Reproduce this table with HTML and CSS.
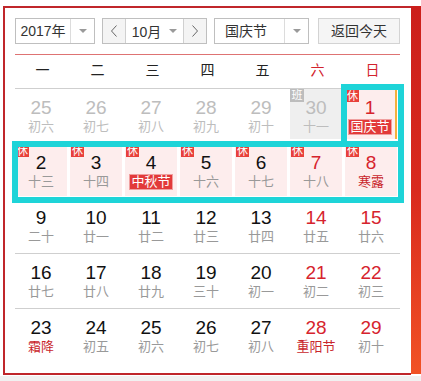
FILE: index.html
```html
<!DOCTYPE html>
<html lang="zh-CN">
<head>
<meta charset="utf-8">
<title>万年历</title>
<link rel="stylesheet" href="styles.css">
</head>
<body>
<div class="page">
  <div class="frame">
    <div class="controls">
      <div class="select year">
        <span class="sel-text">2017年</span>
        <span class="sel-arrow"><i class="tri"></i></span>
      </div>
      <div class="month-group">
        <span class="nav-btn"><svg width="8" height="12" viewBox="0 0 8 12"><polyline points="6.5,0.5 1.5,6 6.5,11.5" fill="none" stroke="#666" stroke-width="1"/></svg></span>
        <span class="month-mid">10月<i class="tri"></i></span>
        <span class="nav-btn"><svg width="8" height="12" viewBox="0 0 8 12"><polyline points="1.5,0.5 6.5,6 1.5,11.5" fill="none" stroke="#666" stroke-width="1"/></svg></span>
      </div>
      <div class="select holiday">
        <span class="sel-text">国庆节</span>
        <span class="sel-arrow"><i class="tri"></i></span>
      </div>
      <div class="today-btn">返回今天</div>
    </div>
    <div class="redline"></div>
    <div class="weekhead">
      <span>一</span><span>二</span><span>三</span><span>四</span><span>五</span><span class="we">六</span><span class="we">日</span>
    </div>
    <div class="week">
      <div class="day prev"><span class="num">25</span><span class="lunar">初六</span></div>
      <div class="day prev"><span class="num">26</span><span class="lunar">初七</span></div>
      <div class="day prev"><span class="num">27</span><span class="lunar">初八</span></div>
      <div class="day prev"><span class="num">28</span><span class="lunar">初九</span></div>
      <div class="day prev"><span class="num">29</span><span class="lunar">初十</span></div>
      <div class="day prev work"><i class="badge ban">班</i><span class="num">30</span><span class="lunar">十一</span></div>
      <div class="day rest sel"><i class="badge">休</i><span class="num red">1</span><span class="lunar"><b class="tag">国庆节</b></span></div>
    </div>
    <div class="week">
      <div class="day rest"><i class="badge">休</i><span class="num">2</span><span class="lunar">十三</span></div>
      <div class="day rest"><i class="badge">休</i><span class="num">3</span><span class="lunar">十四</span></div>
      <div class="day rest"><i class="badge">休</i><span class="num">4</span><span class="lunar"><b class="tag">中秋节</b></span></div>
      <div class="day rest"><i class="badge">休</i><span class="num">5</span><span class="lunar">十六</span></div>
      <div class="day rest"><i class="badge">休</i><span class="num">6</span><span class="lunar">十七</span></div>
      <div class="day rest"><i class="badge">休</i><span class="num red">7</span><span class="lunar">十八</span></div>
      <div class="day rest"><i class="badge">休</i><span class="num red">8</span><span class="lunar red">寒露</span></div>
    </div>
    <div class="week">
      <div class="day"><span class="num">9</span><span class="lunar">二十</span></div>
      <div class="day"><span class="num">10</span><span class="lunar">廿一</span></div>
      <div class="day"><span class="num">11</span><span class="lunar">廿二</span></div>
      <div class="day"><span class="num">12</span><span class="lunar">廿三</span></div>
      <div class="day"><span class="num">13</span><span class="lunar">廿四</span></div>
      <div class="day"><span class="num red">14</span><span class="lunar">廿五</span></div>
      <div class="day"><span class="num red">15</span><span class="lunar">廿六</span></div>
    </div>
    <div class="week">
      <div class="day"><span class="num">16</span><span class="lunar">廿七</span></div>
      <div class="day"><span class="num">17</span><span class="lunar">廿八</span></div>
      <div class="day"><span class="num">18</span><span class="lunar">廿九</span></div>
      <div class="day"><span class="num">19</span><span class="lunar">三十</span></div>
      <div class="day"><span class="num">20</span><span class="lunar">初一</span></div>
      <div class="day"><span class="num red">21</span><span class="lunar">初二</span></div>
      <div class="day"><span class="num red">22</span><span class="lunar">初三</span></div>
    </div>
    <div class="week last">
      <div class="day"><span class="num">23</span><span class="lunar red">霜降</span></div>
      <div class="day"><span class="num">24</span><span class="lunar">初五</span></div>
      <div class="day"><span class="num">25</span><span class="lunar">初六</span></div>
      <div class="day"><span class="num">26</span><span class="lunar">初七</span></div>
      <div class="day"><span class="num">27</span><span class="lunar">初八</span></div>
      <div class="day"><span class="num red">28</span><span class="lunar red">重阳节</span></div>
      <div class="day"><span class="num red">29</span><span class="lunar">初十</span></div>
    </div>
  </div>
  <div class="strip"></div>
  <div class="mark mark-a"></div>
  <div class="mark mark-b"></div>
</div>
</body>
</html>
```

FILE: styles.css
```css
html, body {
  margin: 0;
  padding: 0;
}
body {
  background: #f1f1f1;
  font-family: "Liberation Sans", "Noto Sans CJK SC", sans-serif;
  color: #222;
}
.page {
  position: relative;
  background: #fff;
  height: 376px;
  padding: 6px 0 0 3px;
  box-sizing: border-box;
  display: flex;
  align-items: flex-start;
}
.frame {
  width: 408px;
  height: 369px;
  box-sizing: border-box;
  border: 2px solid #c0262b;
  border-right: none;
  padding: 10px 11px 0 10px;
  background: #fff;
}
.strip {
  width: 10px;
  height: 368px;
  background: linear-gradient(#cb1f1b, #d92a1e 50%, #f15225);
}

/* controls */
.controls {
  display: flex;
  height: 26px;
  font-size: 14px;
  color: #333;
}
.select {
  display: flex;
  border: 1px solid #bfbfbf;
  box-sizing: border-box;
  height: 26px;
  background: #fff;
}
.year { width: 80px; }
.year .sel-text { width: 54px; justify-content: center; }
.holiday { width: 95px; margin-left: 7px; }
.holiday .sel-text { width: 69px; padding-left: 10px; box-sizing: border-box; }
.sel-text {
  display: flex;
  align-items: center;
  line-height: 24px;
}
.sel-arrow {
  flex: 1;
  border-left: 1px solid #dcdcdc;
  display: flex;
  align-items: center;
  justify-content: center;
}
.tri {
  display: inline-block;
  width: 0;
  height: 0;
  border-left: 4px solid transparent;
  border-right: 4px solid transparent;
  border-top: 4px solid #9a9a9a;
}
.month-group {
  display: flex;
  margin-left: 7px;
  width: 105px;
  height: 26px;
  border: 1px solid #bfbfbf;
  box-sizing: border-box;
}
.nav-btn {
  width: 22px;
  background: #f4f4f4;
  display: flex;
  align-items: center;
  justify-content: center;
}
.month-mid {
  flex: 1;
  border-left: 1px solid #d0d0d0;
  border-right: 1px solid #d0d0d0;
  display: flex;
  align-items: center;
  justify-content: center;
  gap: 8px;
  background: #fff;
}
.today-btn {
  margin-left: 9px;
  width: 82px;
  height: 26px;
  box-sizing: border-box;
  border: 1px solid #d3d3d3;
  background: #f5f5f5;
  text-align: center;
  line-height: 24px;
}
.redline {
  height: 1px;
  background: #de7373;
  margin-top: 10px;
}

/* week header */
.weekhead {
  display: grid;
  grid-template-columns: repeat(7, 55px);
  height: 34px;
  box-sizing: border-box;
  border-bottom: 1px solid #cfcfcf;
  font-size: 14px;
  line-height: 31px;
  color: #222;
}
.weekhead span { text-align: center; }
.weekhead .we { color: #d2232d; }

/* weeks */
.week {
  display: grid;
  grid-template-columns: repeat(7, 55px);
  height: 55px;
  box-sizing: border-box;
  border-bottom: 1px solid #cfcfcf;
}
.week.last { border-bottom: none; }
.day {
  position: relative;
  width: 52px;
  height: 52px;
  box-sizing: border-box;
  padding-top: 9px;
  display: flex;
  flex-direction: column;
  align-items: center;
}
.num {
  font-size: 19px;
  line-height: 20px;
  color: #111;
}
.lunar {
  font-size: 13px;
  line-height: 18px;
  color: #999;
  height: 18px;
}
.red { color: #d6232d; }
.lunar.red { color: #c9262c; }
.prev .num, .prev .lunar { color: #bdbdbd; }
.work { background: #efefef; height: 50px; }
.rest { background: #fdeded; }
.sel { border-right: 2px solid #f4b13c; height: 50px; }
.badge {
  position: absolute;
  left: 1px;
  top: 1px;
  width: 13px;
  height: 12px;
  background: #e8403b;
  color: #fff;
  font-style: normal;
  font-size: 11px;
  line-height: 12px;
  text-align: center;
}
.badge.ban {
  left: 0;
  top: 0;
  width: 14px;
  height: 13px;
  background: #bdbdbd;
}
.tag {
  display: inline-block;
  font-weight: normal;
  background: #e23a3a;
  color: #fff;
  padding: 0 2px;
  line-height: 16px;
  margin-top: 1px;
  box-shadow: inset 0 0 0 1px #f0a0a0;
}

/* annotation highlight overlays */
.mark {
  position: absolute;
  border: 6px solid #1ed4d8;
  box-sizing: border-box;
  pointer-events: none;
}
.mark-a { left: 341px; top: 84px; width: 63px; height: 63px; }
.mark-b { left: 12px; top: 141px; width: 392px; height: 62px; }
```
